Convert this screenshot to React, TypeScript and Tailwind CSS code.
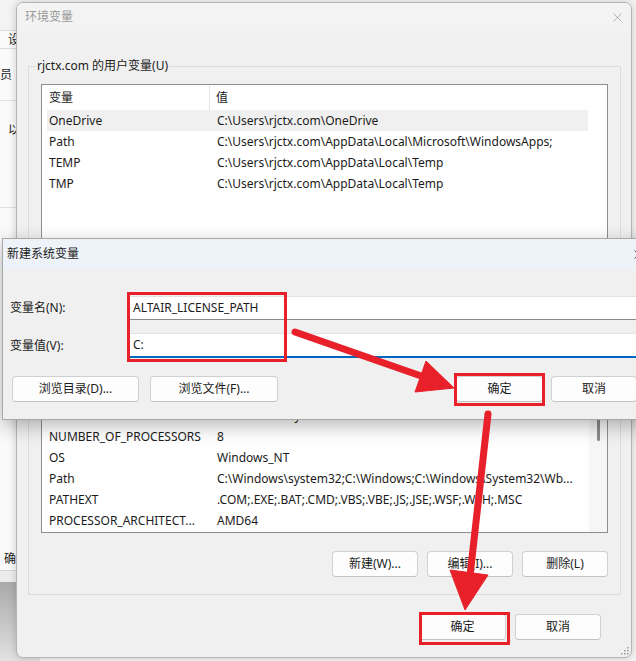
import React from "react";
import { X } from "lucide-react";

const userVars: [string, string][] = [
  ["OneDrive", "C:\\Users\\rjctx.com\\OneDrive"],
  ["Path", "C:\\Users\\rjctx.com\\AppData\\Local\\Microsoft\\WindowsApps;"],
  ["TEMP", "C:\\Users\\rjctx.com\\AppData\\Local\\Temp"],
  ["TMP", "C:\\Users\\rjctx.com\\AppData\\Local\\Temp"],
];

const sysVars: [string, string][] = [
  ["ComSpec", "C:\\Windows\\system32\\cmd.exe"],
  ["DriverData", "C:\\Windows\\System32\\Drivers\\DriverData"],
  ["NUMBER_OF_PROCESSORS", "8"],
  ["OS", "Windows_NT"],
  ["Path", "C:\\Windows\\system32;C:\\Windows;C:\\Windows\\System32\\Wb..."],
  ["PATHEXT", ".COM;.EXE;.BAT;.CMD;.VBS;.VBE;.JS;.JSE;.WSF;.WSH;.MSC"],
  ["PROCESSOR_ARCHITECT...", "AMD64"],
];

function Btn({ label, w }: { label: string; w: string }) {
  return (
    <div
      className={`${w} h-[26px] shrink-0 rounded-[4px] border border-[#d0d0d0] border-b-[#c2c2c2] bg-[#fdfdfd] flex items-center justify-center leading-[14px] text-[#1b1b1b]`}
    >
      {label}
    </div>
  );
}

function VarRow({ name, value, selected }: { name: string; value: string; selected?: boolean }) {
  return (
    <div className={`h-[21px] flex items-center whitespace-nowrap ${selected ? "bg-[#f0f0f0]" : ""}`}>
      <span className="w-[168px] shrink-0 pl-[2px]">{name}</span>
      <span className="pl-[2px]">{value}</span>
    </div>
  );
}

export default function App() {
  return (
    <div className="relative w-[636px] h-[661px] overflow-hidden bg-[#f4f4f4] text-[12px] leading-[16px] text-[#1b1b1b] font-['Noto_Sans','Noto_Sans_CJK_SC',sans-serif]">
      {/* window behind, left strip */}
      <div className="absolute left-0 top-0 w-[40px] h-[582px] bg-[#fafafa] flex flex-col">
        <div className="h-[30px] bg-[#f3f3f3]" />
        <div className="h-[19px] border-y border-[#dcdcdc] bg-[#f9f9f9] pl-[8px] flex items-center">设</div>
        <div className="h-[52px] border-b border-[#e2e2e2] flex items-center pl-0">员</div>
        <div className="h-[107px] border-b border-[#e2e2e2] pl-[8px] pt-[21px]">以</div>
        <div className="flex-1" />
        <div className="h-[23px] border-b border-[#d5d5d5] flex items-center pl-[4px]">确</div>
        <div className="h-[11px] bg-[#ececec]" />
      </div>
      <div className="absolute left-0 top-[582px] w-[40px] h-[79px] bg-gradient-to-b from-[#a9a9a9] to-[#e2e2e2]" />

      {/* 环境变量 window */}
      <div className="absolute left-[16px] top-[2px] w-[616px] h-[656px] rounded-[7px] border border-[#b5b5b5] bg-[#f0f0f0] flex flex-col overflow-hidden shadow-[0_0_8px_rgba(0,0,0,0.18)]">
        <div className="h-[28px] shrink-0 flex items-center justify-between bg-[#f3f3f3] pl-[8px]">
          <span className="text-[#9a9a9a]">环境变量</span>
          <div className="w-[27px] flex items-center justify-center text-[#8f8f8f]">
            <X size={15} strokeWidth={1} />
          </div>
        </div>

        <div className="flex-1 flex flex-col pl-[11px] pr-[10px] pt-[27px]">
          {/* user variables */}
          <fieldset className="border border-[#dcdcdc] min-w-0">
            <legend className="ml-[7px] px-[1px] leading-[16px]">rjctx.com 的用户变量(U)</legend>
            <div className="px-[12px] pt-[10px] pb-[12px] flex flex-col">
              <div className="h-[170px] border border-[#8e8e8e] bg-white flex">
                <div className="flex-1 pl-[5px] flex flex-col">
                  <div className="h-[25px] flex items-center">
                    <span className="w-[163px] pl-[2px] h-full flex items-center border-r border-[#e5e5e5]">变量</span>
                    <span className="pl-[6px]">值</span>
                  </div>
                  {userVars.map(([n, v], i) => (
                    <VarRow key={n + i} name={n} value={v} selected={i === 0} />
                  ))}
                </div>
                <div className="w-[19px]" />
              </div>
              <div className="mt-[10px] flex justify-end gap-[9px]">
                <Btn label="新建(N)..." w="w-[86px]" />
                <Btn label="编辑(E)..." w="w-[86px]" />
                <Btn label="删除(D)" w="w-[86px]" />
              </div>
            </div>
          </fieldset>

          {/* system variables */}
          <fieldset className="mt-[10px] border border-[#dcdcdc] min-w-0">
            <legend className="ml-[7px] px-[1px] leading-[16px]">系统变量(S)</legend>
            <div className="px-[12px] pt-[10px] pb-[17px] flex flex-col">
              <div className="h-[194px] border border-[#8e8e8e] bg-white flex overflow-hidden">
                <div className="flex-1 pl-[5px] pb-[1px] flex flex-col justify-end">
                  {sysVars.map(([n, v], i) => (
                    <VarRow key={n + i} name={n} value={v} />
                  ))}
                </div>
                <div className="w-[18px] bg-[#f6f6f6] flex flex-col items-center pt-[77px]">
                  <div className="w-[3px] h-[24px] rounded-full bg-[#8a8a8a]" />
                </div>
              </div>
              <div className="mt-[18px] flex justify-end gap-[9px]">
                <Btn label="新建(W)..." w="w-[86px]" />
                <Btn label="编辑(I)..." w="w-[86px]" />
                <Btn label="删除(L)" w="w-[86px]" />
              </div>
            </div>
          </fieldset>

          <div className="mt-[19px] flex justify-end gap-[9px] pr-[20px]">
            <Btn label="确定" w="w-[87px]" />
            <Btn label="取消" w="w-[86px]" />
          </div>
        </div>

        {/* resize grip */}
        <svg className="absolute right-[2px] bottom-[2px]" width="8" height="8" viewBox="0 0 8 8">
          <g fill="#9a9a9a">
            <rect x="6" y="0" width="1.5" height="1.5" />
            <rect x="3" y="3" width="1.5" height="1.5" />
            <rect x="6" y="3" width="1.5" height="1.5" />
            <rect x="0" y="6" width="1.5" height="1.5" />
            <rect x="3" y="6" width="1.5" height="1.5" />
            <rect x="6" y="6" width="1.5" height="1.5" />
          </g>
        </svg>
      </div>

      {/* 新建系统变量 dialog */}
      <div className="absolute left-[2px] top-[238px] w-[660px] h-[182px] border border-[#a8a8a8] bg-[#f0f0f0] flex flex-col shadow-[0_6px_18px_rgba(0,0,0,0.28)]">
        <div className="h-[30px] shrink-0 bg-[#eef2f9] flex items-center justify-between pl-[4px]">
          <span>新建系统变量</span>
          <div className="w-[46px] flex items-center justify-center text-[#222]">
            <X size={15} strokeWidth={1.2} />
          </div>
        </div>
        <div className="flex-1 flex flex-col pt-[27px] pr-[14px]">
          <div className="flex items-center">
            <span className="w-[125px] shrink-0 pl-[7px]">变量名(N):</span>
            <div className="flex-1 h-[24px] bg-white rounded-[3px] border border-[#e3e3e3] border-b-[#8a8a8a] flex items-center pl-[4px]">
              ALTAIR_LICENSE_PATH
            </div>
          </div>
          <div className="mt-[13px] flex items-center">
            <span className="w-[125px] shrink-0 pl-[7px]">变量值(V):</span>
            <div className="flex-1 h-[25px] bg-white rounded-[3px] border border-[#e3e3e3] border-b-2 border-b-[#0067c0] flex items-center pl-[4px]">
              C:
            </div>
          </div>
          <div className="mt-[18px] flex items-center justify-between pl-[9px] pr-[10px]">
            <div className="flex gap-[11px]">
              <Btn label="浏览目录(D)..." w="w-[127px]" />
              <Btn label="浏览文件(F)..." w="w-[128px]" />
            </div>
            <div className="flex gap-[8px]">
              <Btn label="确定" w="w-[87px]" />
              <Btn label="取消" w="w-[86px]" />
            </div>
          </div>
        </div>
      </div>

      {/* red highlight boxes */}
      <div className="absolute left-[127px] top-[292px] w-[160px] h-[70px] border-[3px] border-[#e8202a]" />
      <div className="absolute left-[454px] top-[373px] w-[91px] h-[33px] border-[3px] border-[#e8202a]" />
      <div className="absolute left-[419px] top-[612px] w-[91px] h-[33px] border-[3px] border-[#e8202a]" />

      {/* red arrows */}
      <svg className="absolute inset-0 pointer-events-none" width="636" height="661" viewBox="0 0 636 661">
        <g fill="#e8202a" stroke="#e8202a">
          <line x1="295" y1="332" x2="424" y2="377" strokeWidth="7" strokeLinecap="round" />
          <polygon points="426,361 454,388 415,392" strokeWidth="1" strokeLinejoin="round" />
          <line x1="488" y1="414" x2="470" y2="576" strokeWidth="7" strokeLinecap="round" />
          <polygon points="450,570 488,575 465,610" strokeWidth="1" strokeLinejoin="round" />
        </g>
      </svg>
    </div>
  );
}
